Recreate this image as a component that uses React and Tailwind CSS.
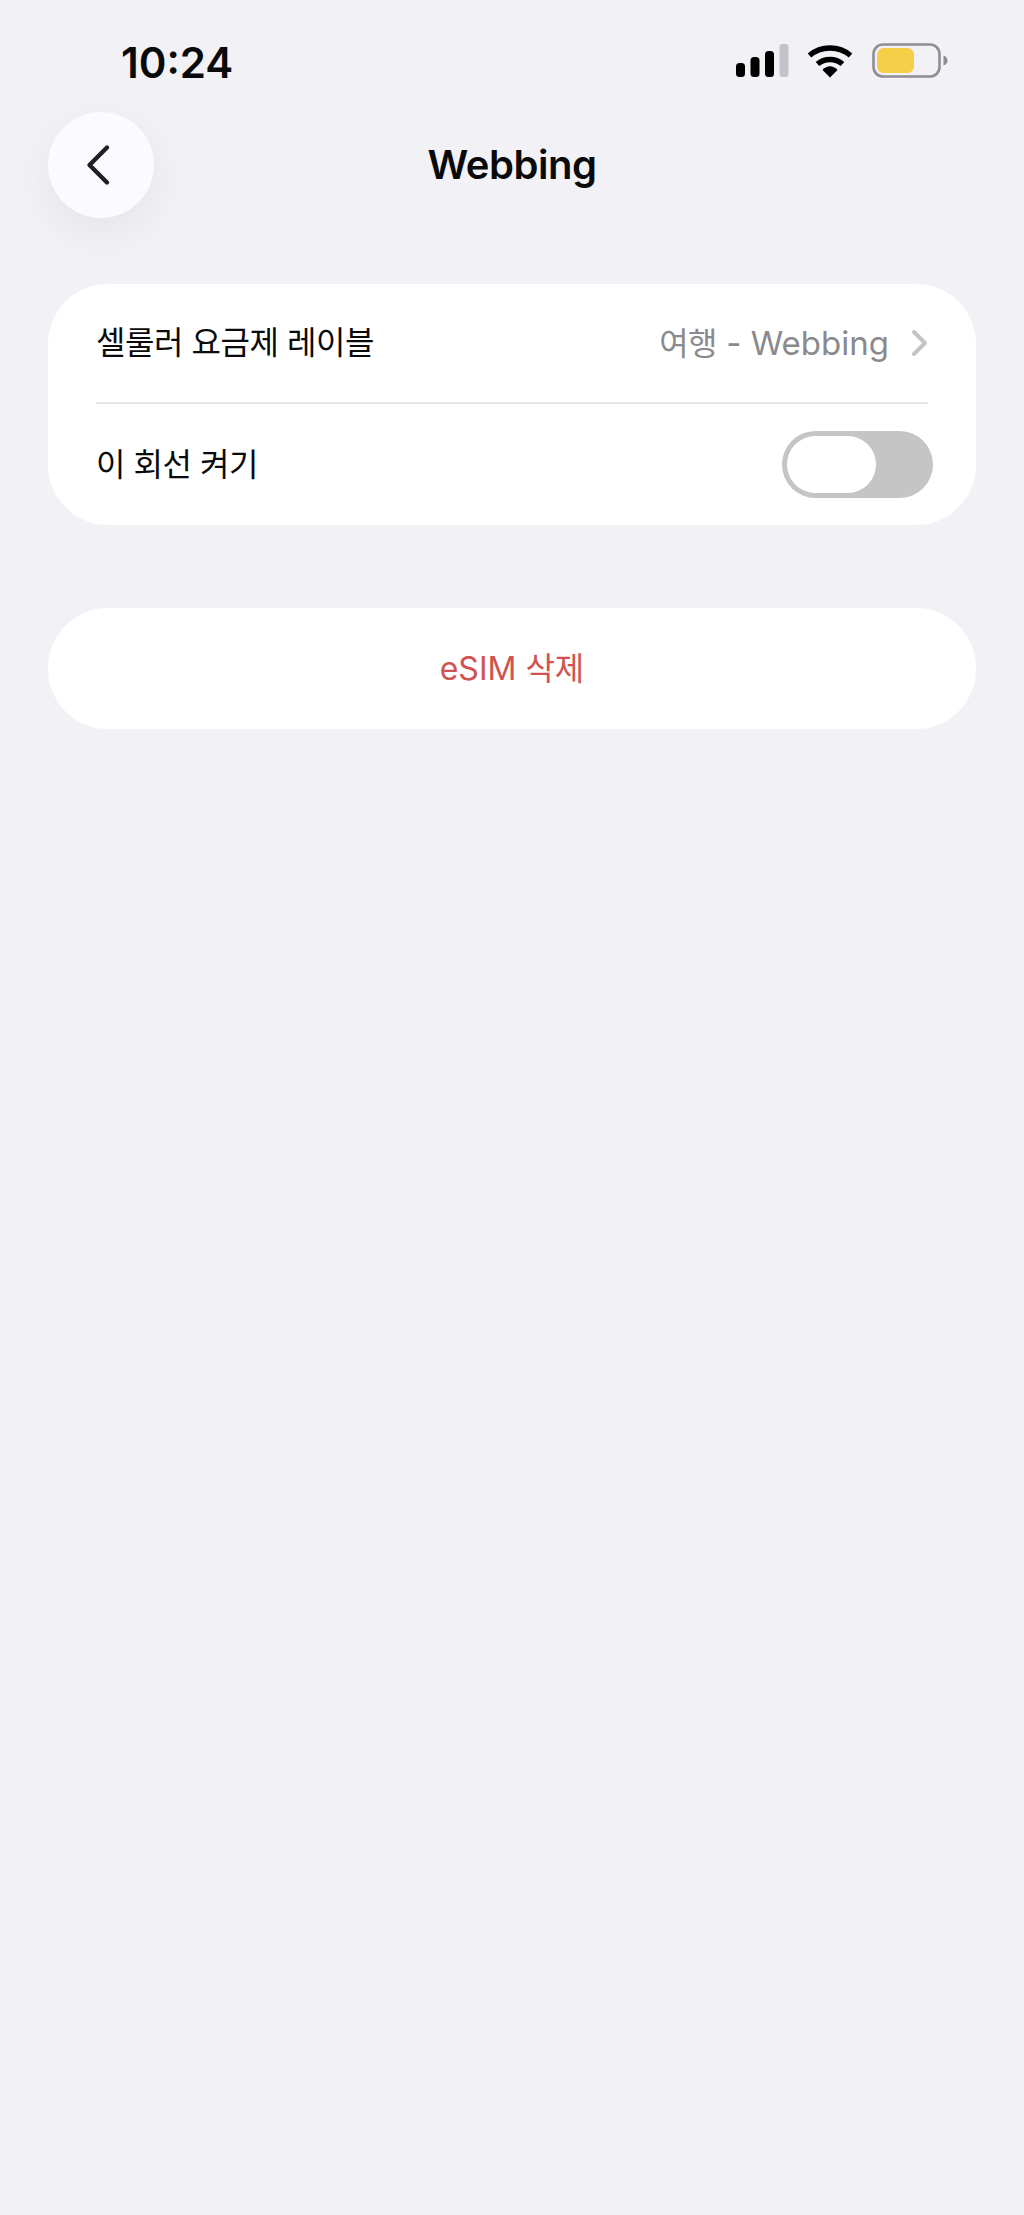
const FONT = "font-['Inter','Noto_Sans_CJK_KR',sans-serif]";

function StatusIcons() {
  return (
    <div className="flex items-center -mt-[3px]">
      <svg width="54" height="34" viewBox="0 0 54 34" className="block">
        <rect x="1" y="19" width="9" height="14" rx="3.5" fill="#000" />
        <rect x="15.5" y="13" width="9" height="20" rx="3.5" fill="#000" />
        <rect x="30" y="7" width="9" height="26" rx="3.5" fill="#000" />
        <rect x="44.5" y="0" width="9" height="33" rx="3" fill="#c2c2c8" />
      </svg>
      <svg width="48" height="34" viewBox="0 0 48 34" className="block ml-[18px]">
        <path d="M2.5 11.5C14 1.5 32 1.5 43.5 11.5" fill="none" stroke="#000" strokeWidth="5.5" strokeLinecap="butt" />
        <path d="M10.5 20C17.5 14 28.5 14 35.5 20" fill="none" stroke="#000" strokeWidth="5.5" />
        <path d="M15.5 26C20 21 26 21 30.5 26L23 33.5Z" fill="#000" />
      </svg>
      <svg width="76" height="36" viewBox="0 0 76 36" className="block ml-[17px]">
        <rect x="1.5" y="1.5" width="66" height="32" rx="9.5" fill="none" stroke="#8e8e93" strokeWidth="2.6" />
        <rect x="5" y="5" width="37" height="25" rx="6.5" fill="#f5cf47" />
        <path d="M71.5 12.5c2.6.8 4 2.6 4 5s-1.4 4.2-4 5Z" fill="#8e8e93" />
      </svg>
    </div>
  );
}

function BackButton() {
  return (
    <button className="w-[106px] h-[106px] rounded-full bg-[#fbfbff] flex items-center justify-center shadow-[0_14px_44px_rgba(0,0,0,0.06)] shrink-0">
      <svg width="26" height="42" viewBox="0 0 26 42" fill="none" className="block mr-[7px]">
        <path d="M22 3.5 4.5 21 22 38.5" stroke="#1f1f24" strokeWidth="4.4" strokeLinecap="round" strokeLinejoin="round" />
      </svg>
    </button>
  );
}

function Toggle() {
  return (
    <div className="w-[151px] h-[67px] rounded-full bg-[#c5c5c5] p-[5px]">
      <div className="w-[89px] h-[57px] rounded-full bg-white" />
    </div>
  );
}

export default function App() {
  return (
    <div className={`${FONT} w-[1024px] h-[2215px] bg-[#f1f1f6] overflow-hidden`}>
      {/* status bar */}
      <div className="flex items-center justify-between pl-[121px] pr-[76px] pt-[33px] h-[92px]">
        <span className="text-[42px] leading-[46px] font-semibold text-[#0a0a0a]">10:24</span>
        <StatusIcons />
      </div>

      {/* header */}
      <div className="grid grid-cols-[106px_1fr_106px] items-center ml-[48px] mr-[48px] mt-[20px]">
        <BackButton />
        <h1 className="text-center text-[40px] leading-[48px] font-semibold text-[#0a0a0a] tracking-[-0.5px] mb-[1px]">Webbing</h1>
        <div />
      </div>

      {/* settings card */}
      <div className="mx-[48px] mt-[66px] bg-white rounded-[60px] px-[48px]">
        <div className="h-[120px] flex items-center justify-between border-b-2 border-[#e6e6e9]">
          <span className="text-[32px] leading-[40px] tracking-[-0.45px] text-[#0a0a0a]">셀룰러 요금제 레이블</span>
          <div className="flex items-center">
            <span className="text-[33px] leading-[40px] text-[#8a8a8e]">
              <span className="text-[32px] tracking-[-0.5px]">여행</span> - Webbing
            </span>
            <svg width="18" height="28" viewBox="0 0 18 28" fill="none" className="block ml-[22px] -mr-[1px]">
              <path d="M3 3 14 14 3 25" stroke="#c4c4c7" strokeWidth="4" strokeLinecap="round" strokeLinejoin="round" />
            </svg>
          </div>
        </div>
        <div className="h-[121px] flex items-center justify-between">
          <span className="text-[32px] leading-[40px] tracking-[-0.45px] text-[#0a0a0a]">이 회선 켜기</span>
          <div className="-mr-[5px]">
            <Toggle />
          </div>
        </div>
      </div>

      {/* delete */}
      <button className="block w-[928px] h-[121px] mx-[48px] mt-[83px] bg-white rounded-[60px] text-[32px] leading-[40px] text-center text-[#d0534f]">
        eSIM 삭제
      </button>
    </div>
  );
}
